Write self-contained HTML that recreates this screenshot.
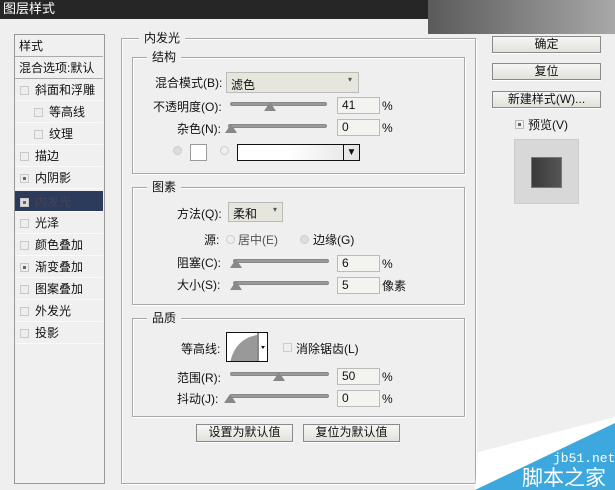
<!DOCTYPE html><html><head><meta charset="utf-8"><style>
*{margin:0;padding:0;box-sizing:border-box}
body{width:615px;height:490px;background:#efefef;position:relative;overflow:hidden;font-family:"Liberation Sans","Noto Sans CJK SC",sans-serif;font-size:12px;color:#111}
.a{position:absolute}
.t{position:absolute;white-space:nowrap;line-height:14px}
.box{position:absolute;border:1px solid #a8a8a8;box-shadow:1px 1px 0 #fff inset,1px 1px 0 #fff}
.lg{position:absolute;background:#efefef;padding:0 5px;line-height:14px}
.li{position:absolute;left:15px;width:88px;height:22px;border-bottom:1px solid #fafafa;padding-left:20px;line-height:22px}
.cb{position:absolute;left:5px;top:7px;width:9px;height:9px;border:1px solid #c8c8c8;background:#eee}
.cb.on::after{content:"";position:absolute;left:2px;top:2px;width:3px;height:3px;background:#666}
.sl{position:absolute;height:4px;border-radius:2px;background:#9a9a9a;border:1px solid #888}
.th{position:absolute;width:0;height:0;border-left:6px solid transparent;border-right:6px solid transparent;border-bottom:9px solid #888}
.in{position:absolute;width:43px;height:17px;border:1px solid #bbb;background:#f3f3ef;padding-left:4px;line-height:15px}
.btn{position:absolute;border:1px solid #8a8a8a;background:linear-gradient(#f6f6f4,#e2e2dc);text-align:center;line-height:15px;box-shadow:0 1px 0 #fff}
</style></head><body>
<div class="a" style="left:0;top:0;width:430px;height:19px;background:#262626"></div>
<div class="a" style="left:428px;top:0;width:187px;height:34px;background:linear-gradient(90deg,#5a5a5a,#a8a8a8)"></div>
<div class="t" style="left:3px;top:2px;color:#fff;font-size:13px">图层样式</div>

<div class="a" style="left:14px;top:34px;width:91px;height:450px;border:1px solid #999;background:#f0f0f0"></div>
<div class="li" style="top:35px;padding-left:4px;border-bottom:1px solid #aaa">样式</div>
<div class="li" style="top:57px;padding-left:4px;border-bottom:1px solid #aaa">混合选项:默认</div>
<div class="li" style="top:79px"><span class="cb"></span>斜面和浮雕</div>
<div class="li" style="top:101px;padding-left:34px"><span class="cb" style="left:19px"></span>等高线</div>
<div class="li" style="top:123px;padding-left:34px"><span class="cb" style="left:19px"></span>纹理</div>
<div class="li" style="top:145px"><span class="cb"></span>描边</div>
<div class="li" style="top:167px"><span class="cb on"></span>内阴影</div>
<div class="li" style="top:191px;background:#2c3a5c;color:#445;height:21px"><span class="cb on" style="background:#ddd"></span>内发光</div>
<div class="li" style="top:212px"><span class="cb"></span>光泽</div>
<div class="li" style="top:234px"><span class="cb"></span>颜色叠加</div>
<div class="li" style="top:256px"><span class="cb on"></span>渐变叠加</div>
<div class="li" style="top:278px"><span class="cb"></span>图案叠加</div>
<div class="li" style="top:300px"><span class="cb"></span>外发光</div>
<div class="li" style="top:322px"><span class="cb"></span>投影</div>

<div class="box" style="left:121px;top:38px;width:355px;height:446px"></div>
<div class="lg" style="left:139px;top:31px">内发光</div>
<div class="box" style="left:132px;top:57px;width:333px;height:117px"></div>
<div class="lg" style="left:147px;top:50px">结构</div>
<div class="t" style="left:155px;top:76px">混合模式(B):</div>
<div class="a" style="left:226px;top:72px;width:133px;height:21px;border:1px solid #bbb;background:#e6e6dc;padding:3px 4px">滤色<span style="position:absolute;right:6px;top:2px;font-size:8px;color:#555">▾</span></div>
<div class="t" style="left:153px;top:100px">不透明度(O):</div>
<div class="sl" style="left:230px;top:102px;width:97px"></div><div class="th" style="left:264px;top:102px"></div>
<div class="in" style="left:337px;top:97px">41</div><div class="t" style="left:382px;top:99px">%</div>
<div class="t" style="left:177px;top:122px">杂色(N):</div>
<div class="sl" style="left:228px;top:124px;width:99px"></div><div class="th" style="left:225px;top:124px"></div>
<div class="in" style="left:337px;top:119px">0</div><div class="t" style="left:382px;top:121px">%</div>
<div class="a" style="left:173px;top:146px;width:9px;height:9px;border-radius:50%;border:1px solid #ccc;background:#ddd"></div>
<div class="a" style="left:190px;top:144px;width:17px;height:17px;border:1px solid #999;background:#fff"></div>
<div class="a" style="left:220px;top:146px;width:9px;height:9px;border-radius:50%;border:1px solid #ccc"></div>
<div class="a" style="left:237px;top:144px;width:123px;height:17px;border:1px solid #111;background:linear-gradient(90deg,#fff 40%,#e4e4e4)"></div>
<div class="a" style="left:343px;top:145px;width:16px;height:15px;border-left:1px solid #111;text-align:center;font-size:10px;line-height:15px">▼</div>

<div class="box" style="left:132px;top:187px;width:333px;height:118px"></div>
<div class="lg" style="left:147px;top:180px">图素</div>
<div class="t" style="left:177px;top:207px">方法(Q):</div>
<div class="a" style="left:228px;top:202px;width:55px;height:20px;border:1px solid #bbb;background:#e6e6dc;padding:2px 4px">柔和<span style="position:absolute;right:5px;top:2px;font-size:8px;color:#555">▾</span></div>
<div class="t" style="left:204px;top:233px">源:</div>
<div class="a" style="left:226px;top:235px;width:9px;height:9px;border-radius:50%;border:1px solid #ccc"></div>
<div class="t" style="left:238px;top:233px;color:#555">居中(E)</div>
<div class="a" style="left:300px;top:235px;width:9px;height:9px;border-radius:50%;border:1px solid #ccc;background:#ddd"></div>
<div class="t" style="left:313px;top:233px">边缘(G)</div>
<div class="t" style="left:177px;top:256px">阻塞(C):</div>
<div class="sl" style="left:233px;top:259px;width:96px"></div><div class="th" style="left:230px;top:259px"></div>
<div class="in" style="left:337px;top:255px">6</div><div class="t" style="left:382px;top:257px">%</div>
<div class="t" style="left:177px;top:278px">大小(S):</div>
<div class="sl" style="left:233px;top:281px;width:96px"></div><div class="th" style="left:230px;top:281px"></div>
<div class="in" style="left:337px;top:277px">5</div><div class="t" style="left:382px;top:279px">像素</div>

<div class="box" style="left:132px;top:318px;width:333px;height:99px"></div>
<div class="lg" style="left:147px;top:311px">品质</div>
<div class="t" style="left:181px;top:342px">等高线:</div>
<div class="a" style="left:226px;top:332px;width:42px;height:30px;border:1px solid #111;background:#fff;overflow:hidden">
<svg width="42" height="30" style="position:absolute;left:0;top:0"><path d="M3 30 Q8 6 30 2 L30 30 Z" fill="#999"/><line x1="31" y1="0" x2="31" y2="30" stroke="#111"/><path d="M34 13 l4 0 -2 3z" fill="#111"/></svg></div>
<div class="a" style="left:283px;top:343px;width:9px;height:9px;border:1px solid #ccc"></div>
<div class="t" style="left:296px;top:342px">消除锯齿(L)</div>
<div class="t" style="left:177px;top:371px">范围(R):</div>
<div class="sl" style="left:230px;top:372px;width:99px"></div><div class="th" style="left:273px;top:372px"></div>
<div class="in" style="left:337px;top:368px">50</div><div class="t" style="left:382px;top:370px">%</div>
<div class="t" style="left:177px;top:392px">抖动(J):</div>
<div class="sl" style="left:230px;top:394px;width:99px"></div><div class="th" style="left:224px;top:394px"></div>
<div class="in" style="left:337px;top:390px">0</div><div class="t" style="left:382px;top:392px">%</div>

<div class="btn" style="left:196px;top:424px;width:97px;height:18px">设置为默认值</div>
<div class="btn" style="left:303px;top:424px;width:97px;height:18px">复位为默认值</div>

<div class="btn" style="left:492px;top:36px;width:109px;height:17px">确定</div>
<div class="btn" style="left:492px;top:63px;width:109px;height:17px">复位</div>
<div class="btn" style="left:492px;top:91px;width:109px;height:17px">新建样式(W)...</div>
<div class="a" style="left:515px;top:120px;width:9px;height:9px;border:1px solid #bbb"><div class="a" style="left:2px;top:2px;width:3px;height:3px;background:#666"></div></div>
<div class="t" style="left:528px;top:118px">预览(V)</div>
<div class="a" style="left:514px;top:139px;width:65px;height:65px;background:#d8d8d8;border:1px solid #ccc"></div>
<div class="a" style="left:531px;top:157px;width:31px;height:31px;background:linear-gradient(90deg,#3a3a3a,#555);border:1px solid #777"></div>

<svg class="a" style="left:0;top:0" width="615" height="490"><polygon points="478,452 615,417 615,425 475,490" fill="#fff"/><polygon points="475,490 615,423 615,490" fill="#3da8de"/></svg>
<div class="t" style="left:553px;top:452px;color:#fff;font-family:'Liberation Mono',monospace;font-size:13px">jb51.net</div>
<div class="t" style="left:522px;top:468px;color:#fff;font-size:21px;line-height:22px">脚本之家</div>
</body></html>
